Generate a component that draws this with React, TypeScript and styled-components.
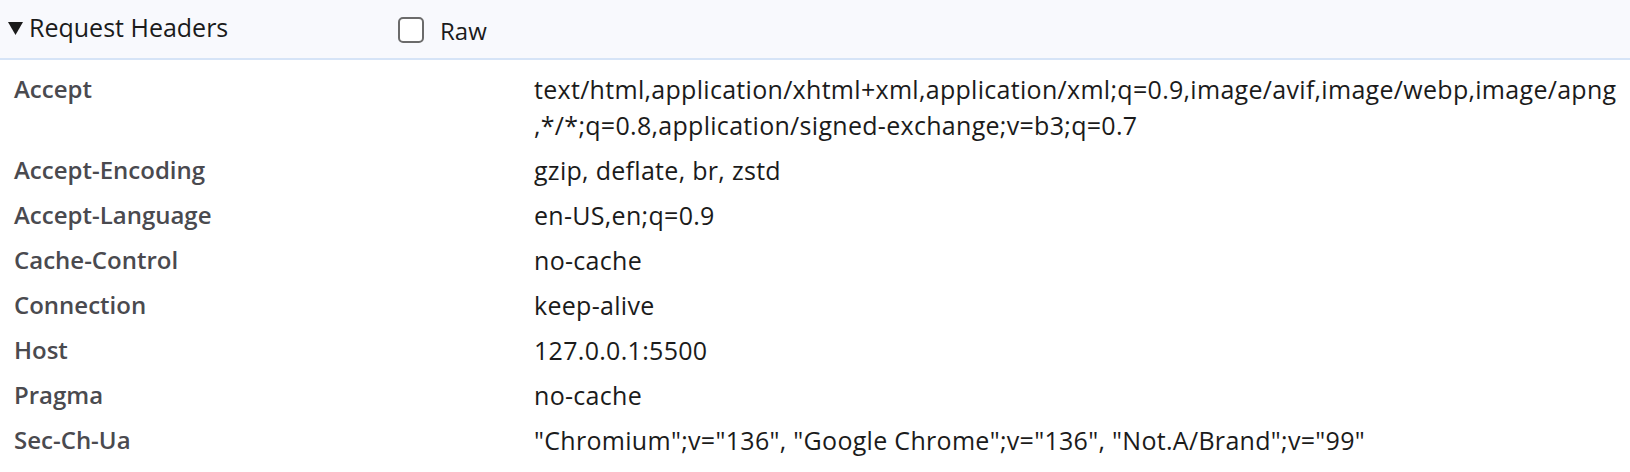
import styled, { createGlobalStyle } from "styled-components";

const GlobalStyle = createGlobalStyle`
    body {
        margin: 0;
        background: #ffffff;
        font-family: "Open Sans", "Noto Sans", sans-serif;
    }
`

const Panel = styled.div`
    width: 1630px;
`

const Toolbar = styled.div`
    display: flex;
    align-items: center;
    height: 60px;
    background: #f8f9fd;
    border-bottom: 2px solid #d6e4f7;
    padding-left: 8px;
    box-sizing: border-box;
`

const Toggle = styled.div`
    display: flex;
    align-items: center;
    gap: 6px;
    width: 390px;
    font-size: 25px;
    color: #1b1b1b;
    margin-top: -4px;
`

const Arrow = styled.svg`
    width: 15px;
    height: 13px;
    margin-top: 2px;
`

const RawLabel = styled.label`
    display: flex;
    align-items: center;
    gap: 16px;
    font-size: 24px;
    color: #1b1b1b;
    margin-top: 2px;
`

const Box = styled.span`
    display: inline-block;
    width: 22px;
    height: 22px;
    border: 2px solid #6b6b6b;
    border-radius: 5px;
    background: #ffffff;
`

const Rows = styled.div`
    padding-top: 6px;
`

const Row = styled.div`
    display: grid;
    grid-template-columns: 520px 1fr;
    padding: 4.5px 0 4.5px 14px;
    line-height: 36px;
`

const Name = styled.div`
    font-size: 24px;
    font-weight: 600;
    color: #4a4a4f;
`

const Value = styled.div`
    font-size: 25px;
    letter-spacing: 0.3px;
    color: #1b1b1b;
    line-break: anywhere;
    word-break: break-all;
    padding-right: 8px;
`

const headers: [string, string][] = [
    ["Accept", "text/html,application/xhtml+xml,application/xml;q=0.9,image/avif,image/webp,image/apng,*/*;q=0.8,application/signed-exchange;v=b3;q=0.7"],
    ["Accept-Encoding", "gzip, deflate, br, zstd"],
    ["Accept-Language", "en-US,en;q=0.9"],
    ["Cache-Control", "no-cache"],
    ["Connection", "keep-alive"],
    ["Host", "127.0.0.1:5500"],
    ["Pragma", "no-cache"],
    ["Sec-Ch-Ua", "\"Chromium\";v=\"136\", \"Google Chrome\";v=\"136\", \"Not.A/Brand\";v=\"99\""],
]

export default function App() {
    return (
        <>
            <GlobalStyle />
            <Panel>
                <Toolbar>
                    <Toggle>
                        <Arrow viewBox="0 0 15 13"><polygon points="0,0 15,0 7.5,13" fill="#1b1b1b" /></Arrow>
                        Request Headers
                    </Toggle>
                    <RawLabel><Box />Raw</RawLabel>
                </Toolbar>
                <Rows>
                    {headers.map(([name, value]) => (
                        <Row key={name}>
                            <Name>{name}</Name>
                            <Value>{value}</Value>
                        </Row>
                    ))}
                </Rows>
            </Panel>
        </>
    )
}
